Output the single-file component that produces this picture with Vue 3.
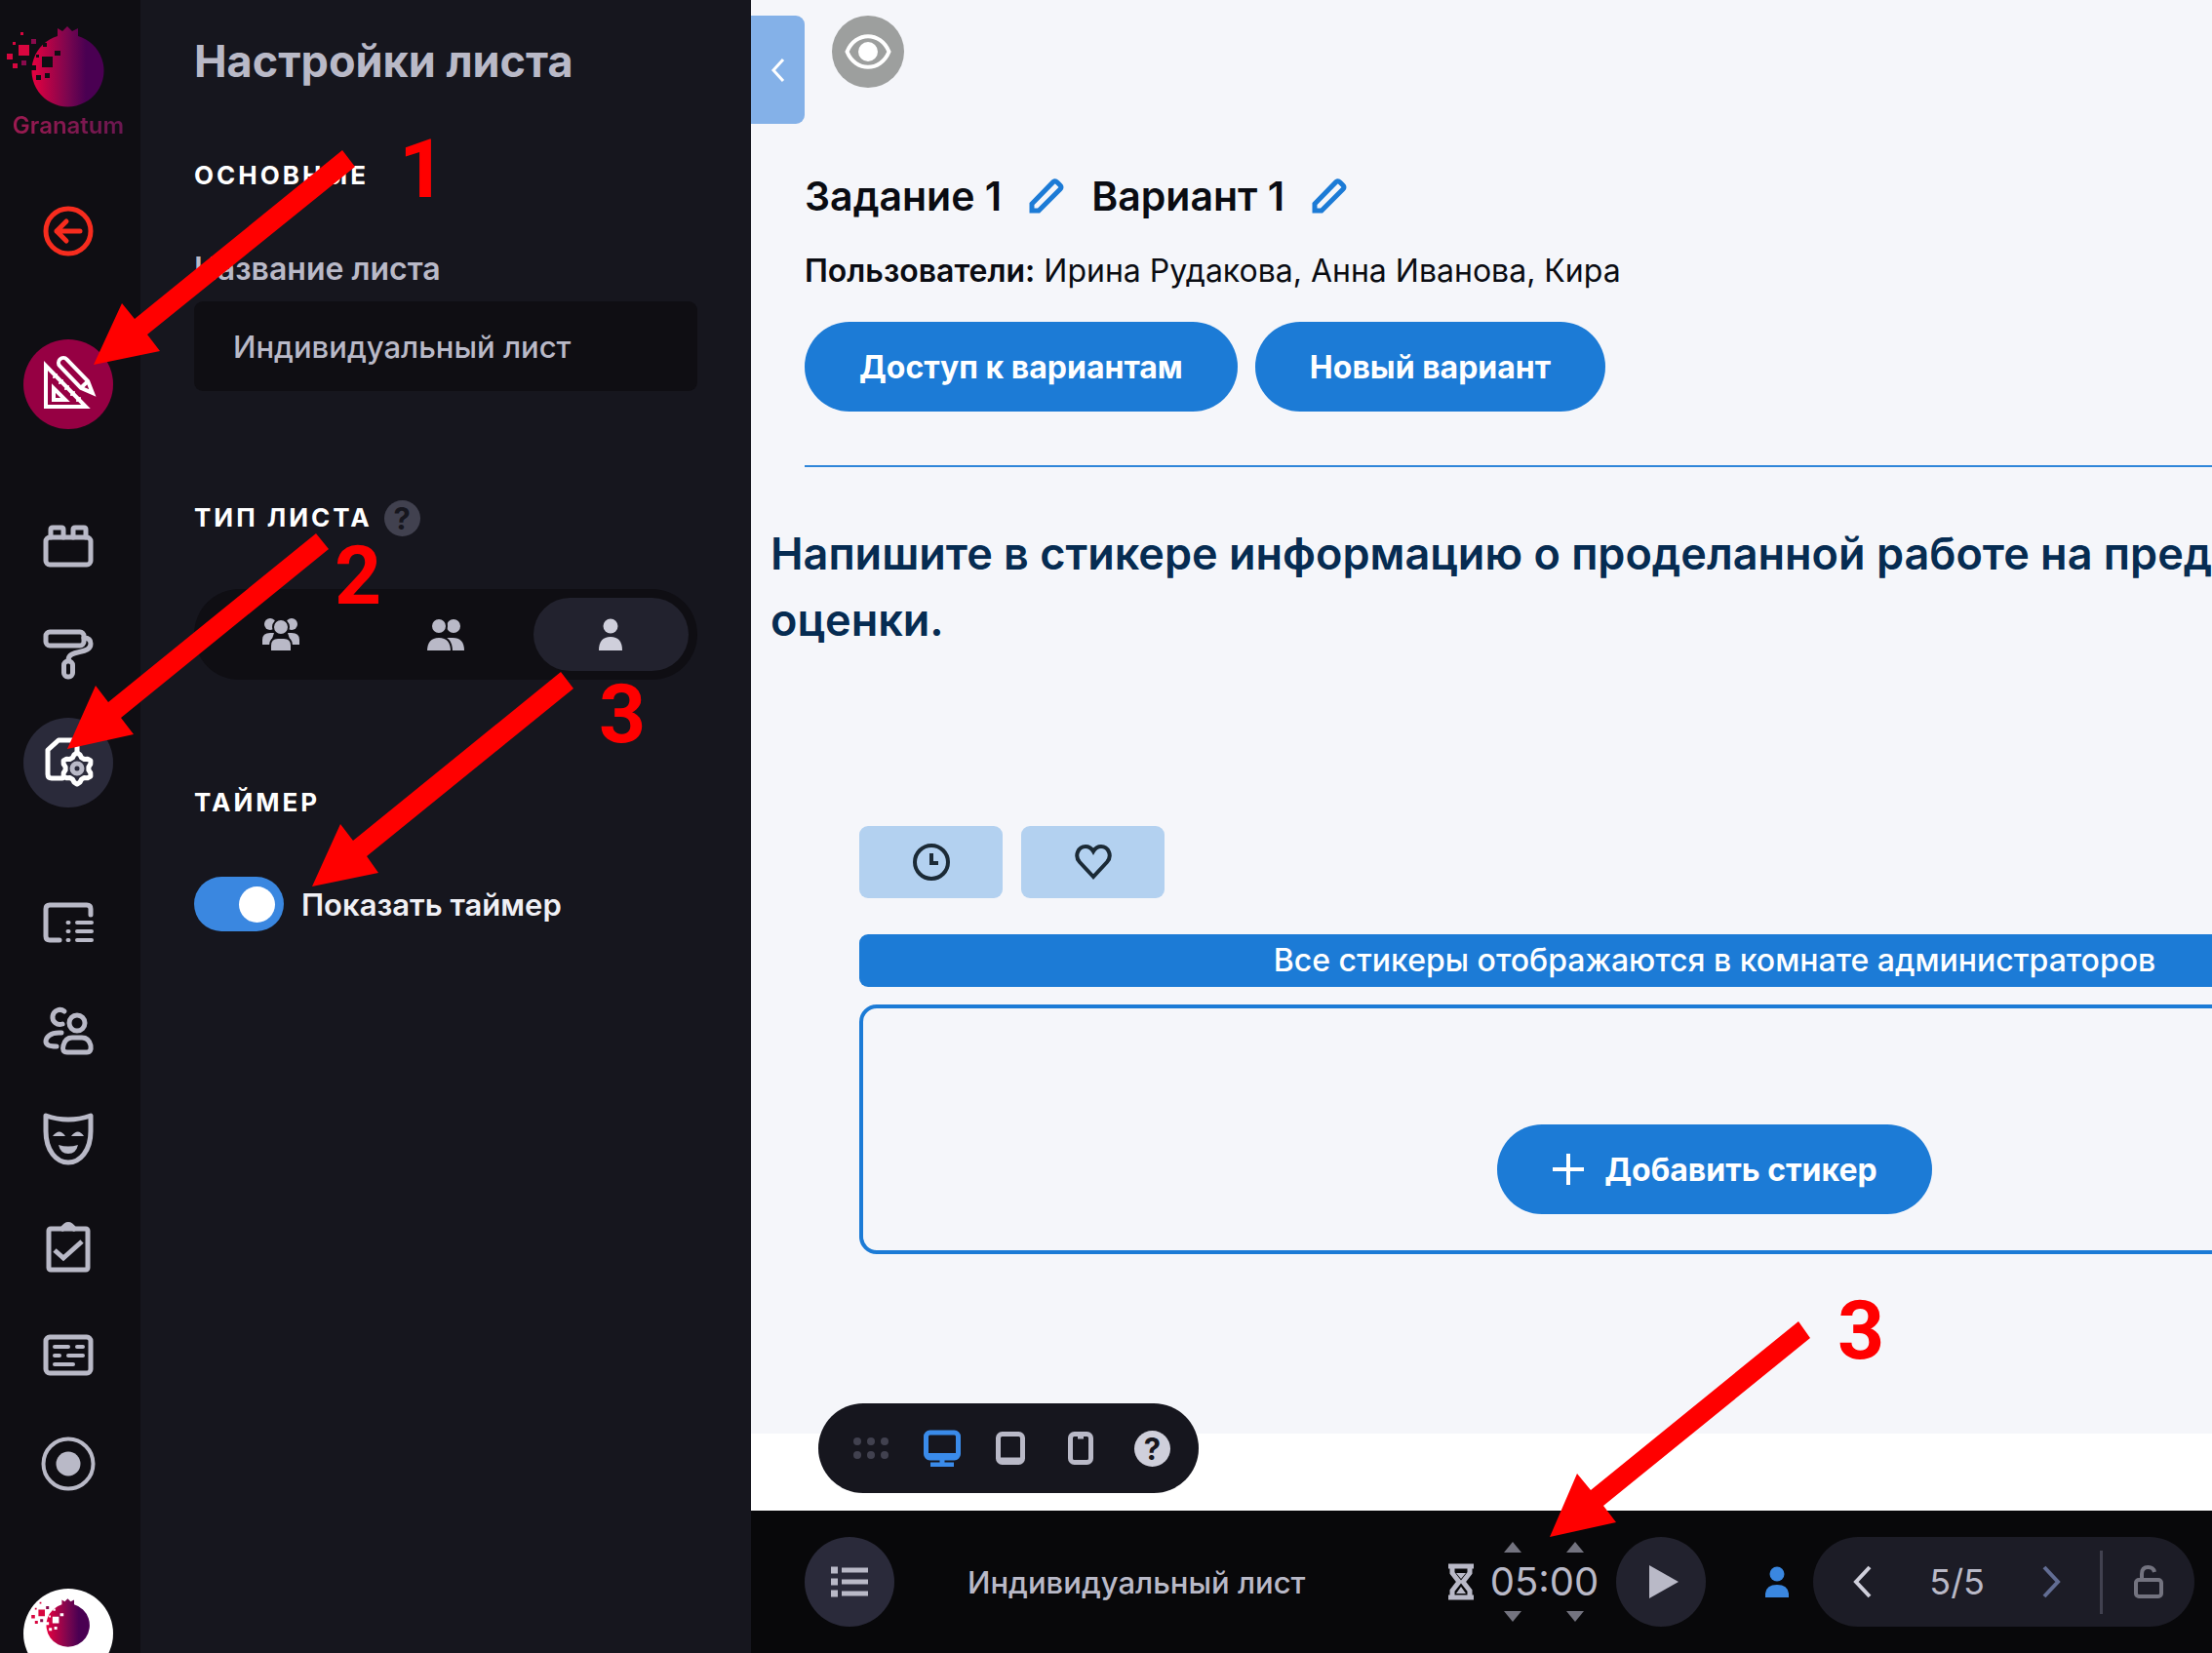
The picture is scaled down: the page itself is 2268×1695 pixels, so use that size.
<template>
  <div class="layout">
    <nav class="sidebar" aria-label="Инструменты">
      <a class="brand" href="#">
        <svg class="brand-mark" viewBox="0 0 120 90" aria-hidden="true">
          <defs>
            <linearGradient id="brandFill" x1="0" x2="1" y1="0" y2="0">
              <stop offset="0" stop-color="#e8003f" />
              <stop offset="0.5" stop-color="#7a064f" />
              <stop offset="0.75" stop-color="#4a0052" />
            </linearGradient>
          </defs>
          <g v-html="fruit"></g>
          <path :d="holes" fill="#0f0e13" />
        </svg>
        <span>Granatum</span>
      </a>
      <button class="nav-button back" aria-label="Назад">
        <svg viewBox="0 0 52 52">
          <circle cx="26" cy="26" r="23" />
          <path d="M38 26H14M24 16 14 26l10 10" />
        </svg>
      </button>
      <button class="nav-button editor" aria-label="Редактор">
        <svg viewBox="0 0 52 52">
          <path d="M3 7V49H44Z" />
          <path d="M11 30V42H23Z" />
          <path class="thin" d="M11 19l3-3M17 25l3-3M23 31l3-3M29 37l3-3M35 43l3-3" />
          <g transform="translate(21 4) rotate(46)">
            <path d="M0-5H31L43 0 31 5H0A5 5 0 0 1 0-5ZM31-5V5" fill="#960043" />
          </g>
        </svg>
      </button>
      <div class="nav-group sheet-tools">
        <button
          v-for="item in sheetTools"
          :key="item.label"
          class="nav-button"
          :class="{ active: item.active }"
          :aria-label="item.label"
        >
          <svg viewBox="0 0 52 52" v-html="item.icon"></svg>
        </button>
      </div>
      <div class="nav-group room-tools">
        <button v-for="item in roomTools" :key="item.label" class="nav-button" :aria-label="item.label">
          <svg viewBox="0 0 52 52" v-html="item.icon"></svg>
        </button>
      </div>
      <button class="avatar" aria-label="Профиль">
        <svg viewBox="0 0 120 90" aria-hidden="true">
          <g v-html="fruit"></g>
          <path :d="holes" fill="#fff" />
        </svg>
      </button>
    </nav>

    <aside class="panel">
      <h1>Настройки листа</h1>

      <section class="main-settings">
        <h2>Основные</h2>
        <label class="field-label" for="sheet-name">Название листа</label>
        <input id="sheet-name" v-model="sheetName" class="field" type="text" />
      </section>

      <section class="type-settings">
        <div class="heading-row">
          <h2>Тип листа</h2>
          <button class="help" aria-label="Справка">?</button>
        </div>
        <div class="segments" role="radiogroup" aria-label="Тип листа">
          <label v-for="type in sheetTypes" :key="type.value" class="segment" :class="{ selected: sheetType === type.value }">
            <input v-model="sheetType" type="radio" name="sheet-type" :value="type.value" :aria-label="type.label" />
            <svg viewBox="0 0 38 38" v-html="type.icon"></svg>
          </label>
        </div>
      </section>

      <section class="timer-settings">
        <h2>Таймер</h2>
        <div class="switch-row">
          <input id="show-timer" v-model="showTimer" class="switch" type="checkbox" />
          <label for="show-timer">Показать таймер</label>
        </div>
      </section>
    </aside>

    <main class="workspace">
      <div class="stage">
        <div class="stage-top">
          <button class="collapse" aria-label="Свернуть панель">
            <svg viewBox="0 0 16 26"><path d="M13 2 3 13l10 11" /></svg>
          </button>
          <button class="preview" aria-label="Предпросмотр">
            <svg viewBox="0 0 48 38">
              <path d="M2.500 19C11-2 37-2 45.500 19 37 40 11 40 2.500 19Z" fill="none" stroke="#fff" stroke-width="4" />
              <circle cx="24" cy="19" r="10" fill="#fff" />
            </svg>
          </button>
        </div>

        <header class="task">
          <div class="task-titles">
            <template v-for="title in titles" :key="title">
              <h2>{{ title }}</h2>
              <button class="edit" :aria-label="'Изменить: ' + title">
                <svg viewBox="0 0 36 36"><path d="M3 33V26L25 3.500Q27 2 29 4L32 7Q34 9 32 11L10 33Z" /></svg>
              </button>
            </template>
          </div>
          <p class="users"><b>Пользователи:</b> {{ users.join(', ') }}</p>
          <div class="task-actions">
            <button class="primary">Доступ к вариантам</button>
            <button class="primary">Новый вариант</button>
          </div>
        </header>

        <h3 class="assignment">Напишите в стикере информацию о проделанной работе на пред<br />оценки.</h3>

        <section class="board">
          <div class="sorting">
            <button aria-label="По времени">
              <svg viewBox="0 0 38 38"><circle cx="19" cy="19" r="17" /><path d="M19 10V20H26" /></svg>
            </button>
            <button aria-label="По лайкам">
              <svg viewBox="0 0 38 38">
                <path d="M19 34 5 19C-1 12 4 3 11 3Q16 3 19 8 22 3 27 3C34 3 39 12 33 19Z" />
              </svg>
            </button>
          </div>
          <p class="notice">Все стикеры отображаются в комнате администраторов</p>
          <div class="stickers">
            <button class="primary add">
              <svg viewBox="0 0 34 34"><path d="M17 1V33M1 17H33" /></svg>
              Добавить стикер
            </button>
          </div>
        </section>
      </div>

      <div class="devices">
        <svg class="grip" viewBox="0 0 36 24" aria-hidden="true">
          <circle v-for="n in 6" :key="n" :cx="4 + ((n - 1) % 3) * 14" :cy="n > 3 ? 19 : 5" r="4" />
        </svg>
        <button class="desktop" aria-label="Компьютер">
          <svg viewBox="0 0 38 38">
            <rect x="2.500" y="3" width="33" height="26" rx="4" />
            <path d="M3 26.500H35M19 30V35M7 36H31" />
          </svg>
        </button>
        <button class="tablet" aria-label="Планшет">
          <svg viewBox="0 0 30 34"><rect x="2.500" y="2.500" width="25" height="29" rx="4" /><path d="M4 29H26" /></svg>
        </button>
        <button class="phone" aria-label="Телефон">
          <svg viewBox="0 0 26 34"><rect x="2.500" y="2.500" width="21" height="29" rx="4" /><path d="M10 5H16" /></svg>
        </button>
        <button class="help light" aria-label="Справка">?</button>
      </div>

      <footer class="bottom-bar">
        <button class="round" aria-label="Список листов">
          <svg viewBox="0 0 40 34">
            <path d="M1 5H8M1 17H8M1 29H8" stroke-width="7" />
            <path d="M12 5H39M12 17H39M12 29H39" stroke-width="5" />
          </svg>
        </button>
        <span class="sheet-title">{{ sheetName }}</span>
        <div class="timer">
          <svg class="hourglass" viewBox="0 0 28 38">
            <path d="M1 3H27M1 35H27M5 4V10L12 19 5 28V34M23 4V10L16 19 23 28V34" />
            <path class="sand" d="M9 10H19L14 16ZM14 24 19 31H9Z" />
          </svg>
          <div class="clock">
            <div class="steps">
              <button aria-label="Больше минут"><svg viewBox="0 0 18 11"><path d="M9 0 18 11H0Z" /></svg></button>
              <button aria-label="Больше секунд"><svg viewBox="0 0 18 11"><path d="M9 0 18 11H0Z" /></svg></button>
            </div>
            <time>05:00</time>
            <div class="steps">
              <button aria-label="Меньше минут"><svg viewBox="0 0 18 11"><path d="M0 0H18L9 11Z" /></svg></button>
              <button aria-label="Меньше секунд"><svg viewBox="0 0 18 11"><path d="M0 0H18L9 11Z" /></svg></button>
            </div>
          </div>
          <button class="round play" aria-label="Запустить таймер">
            <svg viewBox="0 0 30 34"><path d="M0 0 30 17 0 34Z" /></svg>
          </button>
        </div>
        <svg class="person" viewBox="0 0 24 32" aria-hidden="true">
          <circle cx="12" cy="8" r="7.500" />
          <path d="M0 32V28Q1 19 12 19T24 28V32Z" />
        </svg>
        <div class="pager">
          <button aria-label="Предыдущий лист"><svg viewBox="0 0 20 34"><path d="M17 2 3 17 17 32" /></svg></button>
          <span>5/5</span>
          <button class="next" aria-label="Следующий лист"><svg viewBox="0 0 20 34"><path d="M3 2 17 17 3 32" /></svg></button>
          <i></i>
          <button class="lock" aria-label="Заблокировать лист">
            <svg viewBox="0 0 30 34"><rect x="2" y="15" width="26" height="17" rx="3" /><path d="M8 15V9Q8 2 14.500 2 20 2 21 7" /></svg>
          </button>
        </div>
      </footer>
    </main>

    <svg class="hints" aria-hidden="true">
      <polygon v-for="arrow in arrows" :key="arrow" :points="arrow" />
      <text v-for="mark in marks" :key="mark.x" :x="mark.x" :y="mark.y">{{ mark.text }}</text>
    </svg>
  </div>
</template>

<script setup>
import { ref } from 'vue'

const sheetName = ref('Индивидуальный лист')
const sheetType = ref('single')
const showTimer = ref(true)

const titles = ['Задание 1', 'Вариант 1']
const users = ['Ирина Рудакова', 'Анна Иванова', 'Кира']

const fruit = `
  <path fill="url(#brandFill)" d="M59 4l5 3 5-5 5 5 6-3v8a37 37 0 1 1-21 0z"/>
  <path fill="#d8063f" d="M19 21h11v11H19zM7 30h6v6H7zM13 40h5v5h-5zM21 8h3v3h-3zM13 18h3v3h-3z"/>
  <path fill="#8a0a4c" d="M32 15h5v5h-5zM22 37h5v5h-5z"/>`
const holes = 'M43 33h11v11H43zM56 27h6v5h-6zM46 50h5v5h-5zM37 52h5v5h-5zM31 42h6v5h-6zM44 19h4v4h-4zM37 31h3v3h-3z'

// six rounded teeth around (35, 32)
const gearPath = () => {
  const points = []
  for (let tooth = 0; tooth < 6; tooth++) {
    for (const [shift, radius] of [[-12, 14.5], [0, 16], [12, 14.5], [22, 12], [38, 12]]) {
      const angle = ((tooth * 60 - 90 + shift) * Math.PI) / 180
      points.push(`${(35 + radius * Math.cos(angle)).toFixed(1)} ${(32 + radius * Math.sin(angle)).toFixed(1)}`)
    }
  }
  return `M${points.join('L')}Z`
}

const sheetTools = [
  {
    label: 'Блоки',
    icon: '<rect x="3" y="17" width="46" height="28" rx="4"/><path d="M8 17V9q0-2 2-2h9q2 0 2 2v8M31 17V9q0-2 2-2h9q2 0 2 2v8"/>'
  },
  {
    label: 'Оформление',
    icon: '<rect x="3" y="3" width="39" height="14" rx="4"/><path d="M42 9q7 0 7 6c0 12-23 5-23 17"/><rect x="21.500" y="33" width="9" height="16" rx="4"/>'
  },
  {
    label: 'Настройки листа',
    active: true,
    icon: `<path d="M35 15V8q0-5-5-5H16L5 13V38q0 4 4 4H20"/><path d="${gearPath()}"/><circle cx="35" cy="32" r="5" stroke="#b9b9c7"/>`
  }
]

const roomTools = [
  {
    label: 'Список',
    icon: '<path d="M49 18V12q0-4-4-4H7q-4 0-4 4V40q0 4 4 4H17"/><path stroke-width="4" d="M25.500 26h1M25.500 35h1M25.500 44h1M35 26H50M35 35H50M35 44H50"/>'
  },
  {
    label: 'Участники',
    icon: '<circle cx="35" cy="18" r="8"/><path d="M22 6A7.500 7.500 0 1 0 20 19M19 28C7 27 3 33 3 37q0 5 11 5M30 33h10q7 0 9 8 1 7-4 7H25q-6 0-4-7 2-8 9-8Z"/>'
  },
  {
    label: 'Роли',
    icon: '<path d="M3 2Q26 10 49 2V18C49 38 38 50 26 50S3 38 3 18Z"/><path stroke="none" fill="#b9b9c7" d="M10 23q7-9 13 0zM29 23q7-9 13 0zM16 32q10 3 20 0-2 9-10 9T16 32z"/>'
  },
  {
    label: 'Задания',
    icon: '<rect x="6" y="7" width="40" height="42" rx="2"/><path d="M20 7q6-9 12 0"/><path stroke-linecap="butt" stroke-linejoin="miter" d="M12 29l9 8L40 20"/>'
  },
  {
    label: 'Заметки',
    icon: '<rect x="3" y="7" width="46" height="37" rx="4"/><path stroke-width="4" d="M12 17H26M35 17H41M12 26H17M26 26H41M12 35H31"/>'
  },
  {
    label: 'Запись',
    icon: '<circle cx="26" cy="26" r="25.500" stroke-width="4"/><circle cx="26" cy="26" r="12.500" stroke="none" fill="#b9b9c7"/>'
  }
]

const sheetTypes = [
  {
    value: 'group',
    label: 'Групповой',
    icon: '<circle cx="8" cy="8" r="6"/><circle cx="30" cy="8" r="6"/><path d="M0 29V24q0-7 8-7h4l-4 12zM38 29V24q0-7-8-7h-4l4 12z"/><g stroke="#0f0e13" stroke-width="2"><circle cx="19" cy="11" r="8"/><path d="M8 36V30q0-8 8-8h6q8 0 8 8v6z"/></g>'
  },
  {
    value: 'pair',
    label: 'Парный',
    icon: '<circle cx="27" cy="10" r="7"/><path d="M20 35V22h6q12 0 12 13z"/><g stroke="#0f0e13" stroke-width="2"><circle cx="12" cy="10" r="8"/><path d="M-1 36Q-1 21 12 21T25 36z"/></g>'
  },
  {
    value: 'single',
    label: 'Индивидуальный',
    icon: '<circle cx="19" cy="10" r="7.500"/><path d="M7 35Q7 21 19 21T31 35z"/>'
  }
]

const arrows = [
  '351,154 364,171 151,343 164,360 96,374 125,311 138,327',
  '324,547 337,563 124,736 137,753 69,768 98,703 111,720',
  '575,689 588,706 376,878 388,895 320,909 349,845 362,862',
  '1844,1355 1856,1372 1644,1544 1657,1561 1589,1576 1617,1511 1631,1528'
]

const marks = [
  { text: '1', x: 409, y: 202 },
  { text: '2', x: 343, y: 619 },
  { text: '3', x: 614, y: 761 },
  { text: '3', x: 1884, y: 1393 }
]
</script>

<style>
body {
  background: #fff;
}
</style>

<style scoped>
* {
  box-sizing: border-box;
}

.layout {
  position: relative;
  display: flex;
  height: 100vh;
  overflow: hidden;
  font-family: Inter, "Open Sans", sans-serif;
  font-size: 31px;
}

button {
  display: flex;
  align-items: center;
  justify-content: center;
  flex: none;
  margin: 0;
  padding: 0;
  border: 0;
  background: none;
  font: inherit;
  color: inherit;
  cursor: pointer;
}

h1, h2, h3, p {
  margin: 0;
}

svg {
  display: block;
  flex: none;
}

/* sidebar */
.sidebar {
  display: flex;
  flex-direction: column;
  align-items: center;
  flex: none;
  width: 144px;
  padding-right: 4px;
  overflow: hidden;
  background: #0f0e13;
}

.brand {
  display: flex;
  flex-direction: column;
  align-items: center;
  flex: none;
  height: 191px;
  padding-top: 25px;
  font-size: 24px;
  font-weight: 600;
  line-height: 28px;
  text-decoration: none;
}

.brand-mark {
  width: 120px;
  height: 90px;
  margin-right: 20px;
}

.brand span {
  background: linear-gradient(90deg, #9c1a50, #6a1750);
  background-clip: text;
  color: transparent;
}

.nav-button {
  width: 92px;
  height: 92px;
  border-radius: 50%;
}

.nav-button svg {
  width: 52px;
  height: 52px;
  overflow: visible;
  fill: none;
  stroke: #b9b9c7;
  stroke-width: 5;
  stroke-linecap: round;
  stroke-linejoin: round;
}

.nav-button.back svg {
  stroke: #f72c1e;
}

.nav-button.editor {
  margin-top: 65px;
  background: #960043;
}

.nav-button.editor svg {
  stroke: #fff;
  stroke-width: 4;
  stroke-linejoin: miter;
}

.nav-button.editor .thin {
  stroke-width: 2;
}

.nav-button.active {
  background: #2a2a3a;
}

.nav-button.active svg {
  stroke: #fff;
}

.nav-group {
  display: flex;
  flex-direction: column;
  flex: none;
  gap: 19px;
}

.sheet-tools {
  margin-top: 74px;
}

.room-tools {
  margin-top: 72px;
}

.avatar {
  width: 92px;
  height: 92px;
  margin-top: 82px;
  border-radius: 50%;
  background: #fff;
}

.avatar svg {
  width: 72px;
  height: 54px;
  margin: 0 12px 20px 0;
}

/* settings panel */
.panel {
  flex: none;
  width: 626px;
  padding: 35px 55px 0;
  background: #16161e;
  color: #b9b9c7;
}

.panel h1 {
  font-size: 45px;
  font-weight: 700;
  line-height: 56px;
}

.panel h2 {
  color: #fff;
  font-size: 26px;
  font-weight: 700;
  line-height: 32px;
  letter-spacing: 3px;
  text-transform: uppercase;
}

.main-settings {
  margin-top: 73px;
}

.field-label {
  display: block;
  margin: 60px 0 13px;
  font-size: 32px;
  font-weight: 600;
  line-height: 40px;
}

.field {
  display: block;
  width: 100%;
  height: 92px;
  padding: 0 40px;
  border: 0;
  border-radius: 9px;
  background: #0f0e13;
  color: inherit;
  font: inherit;
  font-weight: 500;
}

.type-settings {
  margin-top: 114px;
}

.heading-row {
  display: flex;
  align-items: center;
  gap: 12px;
  height: 32px;
}

.help {
  width: 37px;
  height: 37px;
  border-radius: 50%;
  background: #41414f;
  color: #16161e;
  font-size: 31px;
  font-weight: 700;
  line-height: 37px;
}

.segments {
  display: flex;
  gap: 10px;
  height: 93px;
  margin-top: 57px;
  padding: 9px;
  border-radius: 47px;
  background: #0f0e13;
}

.segment {
  display: flex;
  align-items: center;
  justify-content: center;
  flex: 1;
  border-radius: 38px;
}

.segment.selected {
  background: #22222e;
}

.segment input {
  position: absolute;
  opacity: 0;
}

.segment svg {
  width: 38px;
  height: 38px;
  fill: #b9b9c7;
}

.segment.selected svg {
  fill: #cfcfdb;
}

.timer-settings {
  margin-top: 110px;
}

.switch-row {
  display: flex;
  align-items: center;
  gap: 18px;
  margin-top: 60px;
  color: #f0f0f5;
  font-weight: 600;
}

.switch {
  display: flex;
  align-items: center;
  flex: none;
  appearance: none;
  width: 92px;
  height: 56px;
  margin: 0;
  padding: 0 9px;
  border-radius: 28px;
  background: #41414f;
}

.switch::before {
  content: "";
  width: 37px;
  height: 37px;
  border-radius: 50%;
  background: #fff;
}

.switch:checked {
  justify-content: flex-end;
  background: #3a87e0;
}

/* workspace */
.workspace {
  position: relative;
  display: flex;
  flex-direction: column;
  flex: 1;
  min-width: 0;
  background: #fff;
}

.stage {
  flex: 1;
  min-height: 0;
  margin-bottom: 79px;
  padding-top: 16px;
  overflow: hidden;
  background: #f5f6fa;
}

.stage-top {
  display: flex;
  align-items: flex-start;
  gap: 28px;
}

.collapse {
  width: 55px;
  height: 111px;
  border-radius: 0 9px 9px 0;
  background: #84b1e8;
}

.collapse svg {
  width: 16px;
  height: 26px;
  fill: none;
  stroke: #fff;
  stroke-width: 3;
}

.preview {
  width: 74px;
  height: 74px;
  border-radius: 50%;
  background: #9d9f9e;
}

.preview svg {
  width: 48px;
  height: 38px;
}

.task {
  margin: 46px 0 0 55px;
  padding-bottom: 55px;
  border-bottom: 2px solid #2f86d9;
  color: #0a0c12;
}

.task-titles {
  display: flex;
  align-items: center;
}

.task-titles h2 {
  font-size: 41px;
  font-weight: 600;
  line-height: 56px;
}

.edit {
  margin: 0 28px;
}

.edit svg {
  width: 36px;
  height: 36px;
  fill: none;
  stroke: #1c7bd6;
  stroke-width: 5;
}

.users {
  margin: 29px 0 32px;
  font-size: 32px;
  line-height: 40px;
}

.users b {
  font-weight: 600;
}

.task-actions {
  display: flex;
  gap: 18px;
}

.primary {
  height: 92px;
  padding: 0 56px;
  border-radius: 46px;
  background: #1c7bd6;
  color: #fff;
  font-size: 32px;
  font-weight: 700;
}

.assignment {
  margin: 55px 0 0 20px;
  color: #062c52;
  font-size: 45px;
  font-weight: 600;
  line-height: 68px;
  white-space: nowrap;
}

/* the board is wider than the visible part of the stage */
.board {
  margin: 177px -367px 0 111px;
}

.sorting {
  display: flex;
  gap: 19px;
}

.sorting button {
  width: 147px;
  height: 74px;
  border-radius: 9px;
  background: #b3d1f0;
}

.sorting svg {
  width: 38px;
  height: 38px;
  fill: none;
  stroke: #1b2a36;
  stroke-width: 4;
}

.notice {
  margin: 37px 0 18px;
  border-radius: 9px;
  background: #1c7bd6;
  color: #fff;
  font-size: 32px;
  font-weight: 500;
  line-height: 54px;
  text-align: center;
}

.stickers {
  display: flex;
  justify-content: center;
  height: 256px;
  padding-top: 119px;
  border: 4px solid #1c7bd6;
  border-radius: 18px;
}

.add {
  gap: 20px;
}

.add svg {
  width: 34px;
  height: 34px;
  stroke: #fff;
  stroke-width: 4;
}

.devices {
  position: absolute;
  bottom: 164px;
  left: 69px;
  display: flex;
  align-items: center;
  height: 92px;
  padding: 0 29px 0 36px;
  border-radius: 46px;
  background: #16161e;
}

.devices button svg {
  width: auto;
  height: 34px;
  fill: none;
  stroke: #b9b9c7;
  stroke-width: 5;
}

.devices .grip {
  width: 36px;
  height: 24px;
  fill: #41414f;
}

.devices .desktop {
  margin: 0 36px;
}

.devices .desktop svg {
  height: 38px;
  stroke: #3a8bea;
}

.devices .phone {
  margin: 0 42px 0 44px;
}

.help.light {
  background: #cfcfdb;
}

/* bottom bar */
.bottom-bar {
  display: flex;
  align-items: center;
  flex: none;
  height: 146px;
  padding: 0 18px 0 55px;
  background: #08080a;
  color: #b9b9c7;
}

.round {
  width: 92px;
  height: 92px;
  border-radius: 50%;
  background: #2a2a3a;
}

.round svg {
  width: 40px;
  height: 34px;
  stroke: #b9b9c7;
}

.sheet-title {
  margin-left: 75px;
  font-weight: 500;
}

.timer {
  display: flex;
  align-items: center;
  margin-left: auto;
}

.hourglass {
  width: 28px;
  height: 38px;
  fill: none;
  stroke: #b9b9c7;
  stroke-width: 5;
}

.hourglass .sand {
  fill: #b9b9c7;
  stroke: none;
}

.clock {
  display: flex;
  flex-direction: column;
  align-items: center;
  gap: 10px;
  margin: 0 18px 0 16px;
}

.clock time {
  font-size: 40px;
  line-height: 40px;
}

.steps {
  display: flex;
  gap: 46px;
}

.steps svg {
  width: 18px;
  height: 11px;
  fill: #73737f;
}

.round.play {
  padding-left: 5px;
  background: #22222e;
}

.play svg {
  width: 30px;
  fill: #b9b9c7;
  stroke: none;
}

.person {
  width: 24px;
  height: 32px;
  margin: 0 25px 0 61px;
  fill: #3a87e0;
}

.pager {
  display: flex;
  align-items: center;
  height: 92px;
  padding: 0 32px 0 41px;
  border-radius: 46px;
  background: #1c1c26;
  font-size: 36px;
}

.pager span {
  margin: 0 58px;
}

.pager svg {
  width: 20px;
  height: 34px;
  fill: none;
  stroke: #cfcfdb;
  stroke-width: 4;
}

.pager .next svg {
  stroke: #626d93;
}

.pager i {
  width: 3px;
  height: 65px;
  margin: 0 32px 0 40px;
  background: #41414f;
}

.pager .lock svg {
  width: 30px;
  stroke: #73737f;
}

/* numbered hints over the interface */
.hints {
  position: absolute;
  top: 0;
  left: 0;
  width: 100%;
  height: 100%;
  fill: #f00;
  font-family: Roboto, "Liberation Sans", sans-serif;
  font-size: 84px;
  font-weight: 700;
  pointer-events: none;
}
</style>
